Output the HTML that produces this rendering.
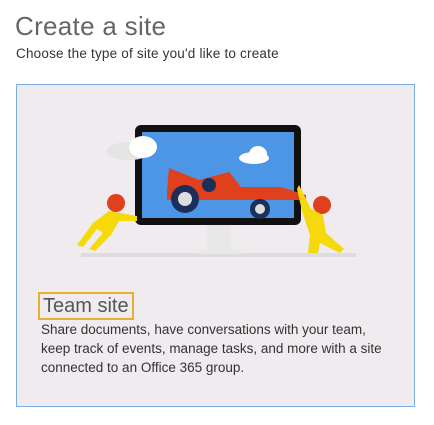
<!DOCTYPE html>
<html><head><style>
body{margin:0;width:434px;height:425px;background:#fff;font-family:"Liberation Sans",sans-serif;position:relative;overflow:hidden}
.h{position:absolute;left:15px;top:11px;font-size:26px;color:#666;letter-spacing:0.3px}
.s{position:absolute;left:16px;top:46px;font-size:13.5px;color:#333;letter-spacing:0.2px}
.card{position:absolute;left:16px;top:84px;width:397px;height:321px;border:1px solid #7aaede;background:#efebef}
.ts{position:absolute;left:21px;top:207px;padding:0 3px;border:2px solid #e8b030;font-size:20px;color:#555;line-height:24px}
.d{position:absolute;left:24px;top:235px;width:352px;font-size:13.5px;line-height:19px;color:#333}
</style></head><body>
<div class="h">Create a site</div>
<div class="s">Choose the type of site you'd like to create</div>
<div class="card">
<svg width="397" height="200" style="position:absolute;left:0;top:0">
<rect x="64" y="168" width="275" height="4" fill="#ddd"/>
<path d="M190 140 h24 v26 h10 v3 h-44 v-3 h10z" fill="#e8e8e8"/>
<rect x="118" y="40" width="166" height="100" rx="6" fill="#111"/>
<rect x="125" y="47" width="152" height="86" fill="#4d96e6"/>
<ellipse cx="112" cy="66" rx="22" ry="9" fill="#e4e4e4"/>
<ellipse cx="126" cy="62" rx="14" ry="11" fill="#fff"/>
<ellipse cx="237" cy="73" rx="15" ry="6" fill="#fff"/>
<ellipse cx="241" cy="69" rx="9" ry="8" fill="#fff"/>
<path d="M150 106 l2-23 l30 12 l30-8 l12 15 l40 0 l25 8 v5 h-139z" fill="#e0401c"/>
<circle cx="192" cy="100" r="7" fill="#1a2f5a"/>
<circle cx="168" cy="114" r="14" fill="#1a2f5a"/><circle cx="168" cy="114" r="7" fill="#ddd"/>
<circle cx="243" cy="124" r="10" fill="#1a2f5a"/><circle cx="243" cy="124" r="5" fill="#ddd"/>
<circle cx="99" cy="118" r="9" fill="#e0401c"/>
<path d="M92 126 l28 5 l0 5 l-18 0 l-8 14 l-16 16 l-6-2 l14-16 l-6-4 l-14 18 l-6-2 l16-22z" fill="#f5d90a"/>
<circle cx="305" cy="120" r="9" fill="#e0401c"/>
<path d="M282 100 l12 24 l12 6 l3 18 l18 16 l-4 4 l-20-10 l-2 10 l-10 0 l2-18 l-8-24 l-5-22z" fill="#f5d90a"/>
</svg>
<div class="ts">Team site</div>
<div class="d">Share documents, have conversations with your team, keep track of events, manage tasks, and more with a site connected to an Office 365 group.</div>
</div>
</body></html>
